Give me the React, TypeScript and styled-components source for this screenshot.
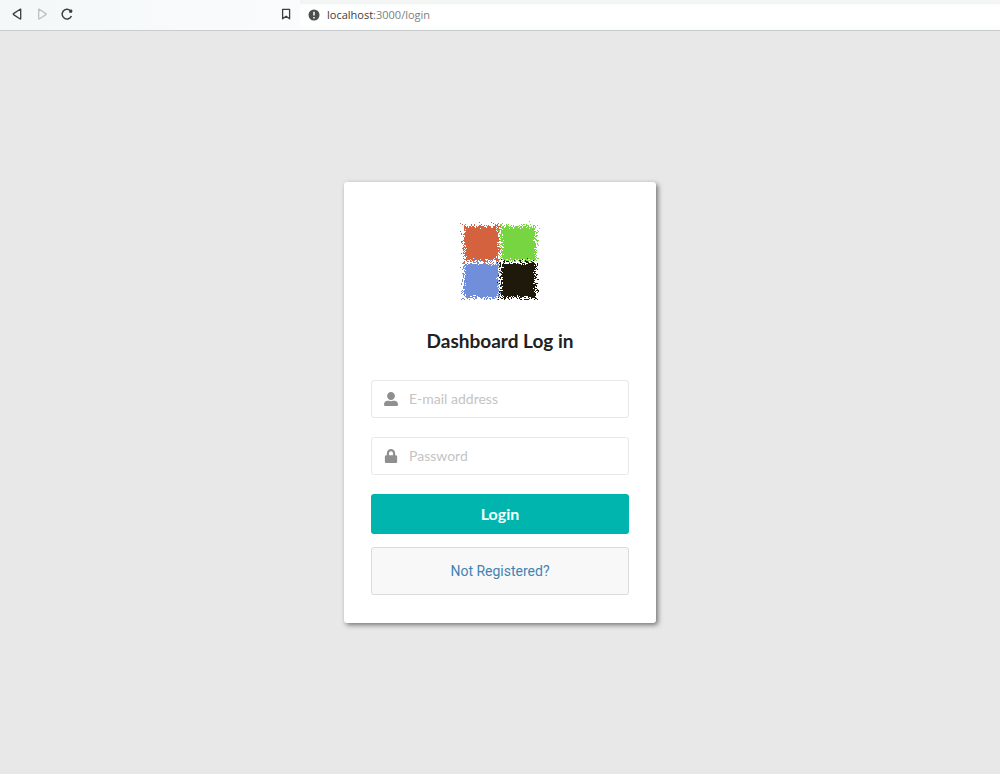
import React from 'react';
import styled, { createGlobalStyle } from 'styled-components';
import { FaLock, FaUserAlt } from 'react-icons/fa';

const GlobalStyle = createGlobalStyle`
  *, *::before, *::after { box-sizing: border-box; }
  body { margin: 0; background: #e8e8e8; font-family: Lato, "Liberation Sans", sans-serif; }
`;

const Page = styled.div`
  min-height: 100vh;
  display: flex;
  flex-direction: column;
`;

const Toolbar = styled.header`
  height: 31px;
  display: grid;
  grid-template-columns: 300px 1fr;
  background: #f3f5f5;
  border-bottom: 1px solid #c9cdcd;
`;

const NavButtons = styled.nav`
  display: flex;
  align-items: center;
  gap: 9px;
  padding: 0 6px 2px 9px;
  background: linear-gradient(90deg, #f4f8f9, #fafbfc);
`;

const IconButton = styled.button<{ $end?: boolean }>`
  display: flex;
  width: 16px;
  height: 16px;
  padding: 0;
  border: 0;
  background: none;
  color: #3c3f42;
  margin-left: ${({ $end }) => ($end ? 'auto' : '0')};
  &:disabled { color: #bcc0c0; }
`;

const AddressBar = styled.div`
  display: flex;
  align-items: center;
  gap: 7px;
  margin-top: 4px;
  padding: 0 8px 5px;
  background: linear-gradient(#fafcfb, #ffffff 5px, #ffffff 19px, #fafbfb);
  color: #4b4d4f;
`;

const Address = styled.a`
  font: 11px/16px "Open Sans", "Noto Sans", sans-serif;
  color: #7d7f81;
  text-decoration: none;
`;

const Host = styled.span`
  color: #3c3e40;
`;

const Main = styled.main`
  flex: 1;
  display: flex;
  align-items: center;
  justify-content: center;
`;

const Card = styled.form`
  width: 100%;
  max-width: 312px;
  display: flex;
  flex-direction: column;
  padding: 38px 27px 28px;
  background: #fff;
  border-radius: 3px;
  box-shadow: 2px 2px 5px rgba(0, 0, 0, 0.5);
`;

const Logo = styled.svg`
  display: block;
  align-self: center;
`;

const Title = styled.h1`
  margin: 27px 0 25px;
  font-size: 19px;
  line-height: 28px;
  font-weight: 700;
  text-align: center;
  color: #202122;
`;

const Field = styled.label`
  display: flex;
  align-items: center;
  height: 38px;
  margin-bottom: 19px;
  padding-left: 12px;
  gap: 5px;
  border: 1px solid #e8e8e8;
  border-radius: 3px;
  color: #8f8f8f;
`;

const FieldIcon = styled.span`
  display: flex;
  justify-content: center;
  width: 14px;
`;

const Input = styled.input`
  flex: 1;
  min-width: 0;
  padding: 0 6px;
  border: 0;
  outline: 0;
  background: none;
  font: 14px/20px Lato, sans-serif;
  color: #333;
  &::placeholder { color: #c4c4c4; opacity: 1; }
`;

const LoginButton = styled.button`
  height: 40px;
  padding: 0;
  border: 0;
  border-radius: 3px;
  background: #00b5ad;
  color: #f2fffe;
  font: 700 16px/20px Lato, sans-serif;
`;

const Message = styled.div`
  display: flex;
  align-items: center;
  justify-content: center;
  height: 48px;
  margin-top: 13px;
  border: 1px solid #d9dadb;
  border-radius: 3px;
  background: #f8f8f9;
`;

const RegisterLink = styled.a`
  font: 14px/20px Roboto, sans-serif;
  color: #4183b4;
  text-decoration: none;
`;

/* Each tile is a solid square whose edge dissolves into single-pixel grains. */
const tiles = [
  { x: 4, y: 6, color: '#d4623f' },
  { x: 41, y: 6, color: '#76d540' },
  { x: 4, y: 43, color: '#718edb' },
  { x: 41, y: 43, color: '#1e190b' },
];

function grainPath(left: number, top: number, seed: number) {
  let state = seed;
  const random = () => {
    state = (state * 1664525 + 1013904223) % 4294967296;
    return state / 4294967296;
  };
  const size = 35;
  let path = '';
  for (let y = -5; y < size + 5; y++) {
    for (let x = -5; x < size + 5; x++) {
      const depth = Math.min(x, y, size - 1 - x, size - 1 - y);
      const density =
        depth >= 3 ? 1 : [0.01, 0.03, 0.1, 0.2, 0.36, 0.6, 0.8, 0.93][depth + 5];
      if (random() < density) path += `M${left + x} ${top + y}h1v1h-1z`;
    }
  }
  return path;
}

const grains = tiles.map((tile, i) => ({
  color: tile.color,
  d: grainPath(tile.x, tile.y, 71 + i * 997),
}));

function BrandLogo() {
  return (
    <Logo width="80" height="80" viewBox="0 0 80 80" role="img" aria-label="Dashboard">
      {grains.map((grain) => (
        <path key={grain.color} d={grain.d} fill={grain.color} />
      ))}
    </Logo>
  );
}

const stroke = { fill: 'none', stroke: 'currentColor', strokeWidth: 1.3, strokeLinejoin: 'round' } as const;

export default function App() {
  return (
    <Page>
      <GlobalStyle />
      <Toolbar>
        <NavButtons aria-label="Browser">
          <IconButton type="button" aria-label="Back">
            <svg width="16" height="16" {...stroke}>
              <path d="M11.7 3.5v9.2q0 .5-.5.3L4.5 8.6q-.6-.5 0-1l6.7-4.4q.5-.2.5.3z" />
            </svg>
          </IconButton>
          <IconButton type="button" aria-label="Forward" disabled>
            <svg width="16" height="16" {...stroke}>
              <path d="M4.7 3.5v9.2q0 .5.5.3l6.7-4.4q.6-.5 0-1L5.2 3.2q-.5-.2-.5.3z" />
            </svg>
          </IconButton>
          <IconButton type="button" aria-label="Reload">
            <svg width="16" height="16" {...stroke} strokeWidth={1.5}>
              <path d="M12.4 10A4.8 4.8 0 1 1 11.3 4.7" />
              <circle cx="11.8" cy="5.1" r="1.7" fill="currentColor" stroke="none" />
              <path d="M13 3.2v3.2H9.8z" fill="currentColor" stroke="none" />
            </svg>
          </IconButton>
          <IconButton type="button" aria-label="Bookmark" $end>
            <svg width="16" height="16" {...stroke}>
              <path d="M4.6 3.3h7v9.5l-3.5-2.6-3.5 2.6z" />
            </svg>
          </IconButton>
        </NavButtons>
        <AddressBar>
          <svg width="12" height="12" viewBox="0 0 12 12" role="img" aria-label="Not secure">
            <circle cx="6" cy="6" r="5.5" fill="currentColor" />
            <path d="M6 2.8v3.7M6 8v1.5" stroke="#fff" strokeWidth="1.5" />
          </svg>
          <Address href="/login">
            <Host>localhost</Host>:3000/login
          </Address>
        </AddressBar>
      </Toolbar>
      <Main>
        <Card onSubmit={(event) => event.preventDefault()}>
          <BrandLogo />
          <Title>Dashboard Log in</Title>
          <Field>
            <FieldIcon><FaUserAlt size={14} /></FieldIcon>
            <Input type="email" placeholder="E-mail address" aria-label="E-mail address" />
          </Field>
          <Field>
            <FieldIcon><FaLock size={14} /></FieldIcon>
            <Input type="password" placeholder="Password" aria-label="Password" />
          </Field>
          <LoginButton type="submit">Login</LoginButton>
          <Message>
            <RegisterLink href="/register">Not Registered?</RegisterLink>
          </Message>
        </Card>
      </Main>
    </Page>
  );
}
